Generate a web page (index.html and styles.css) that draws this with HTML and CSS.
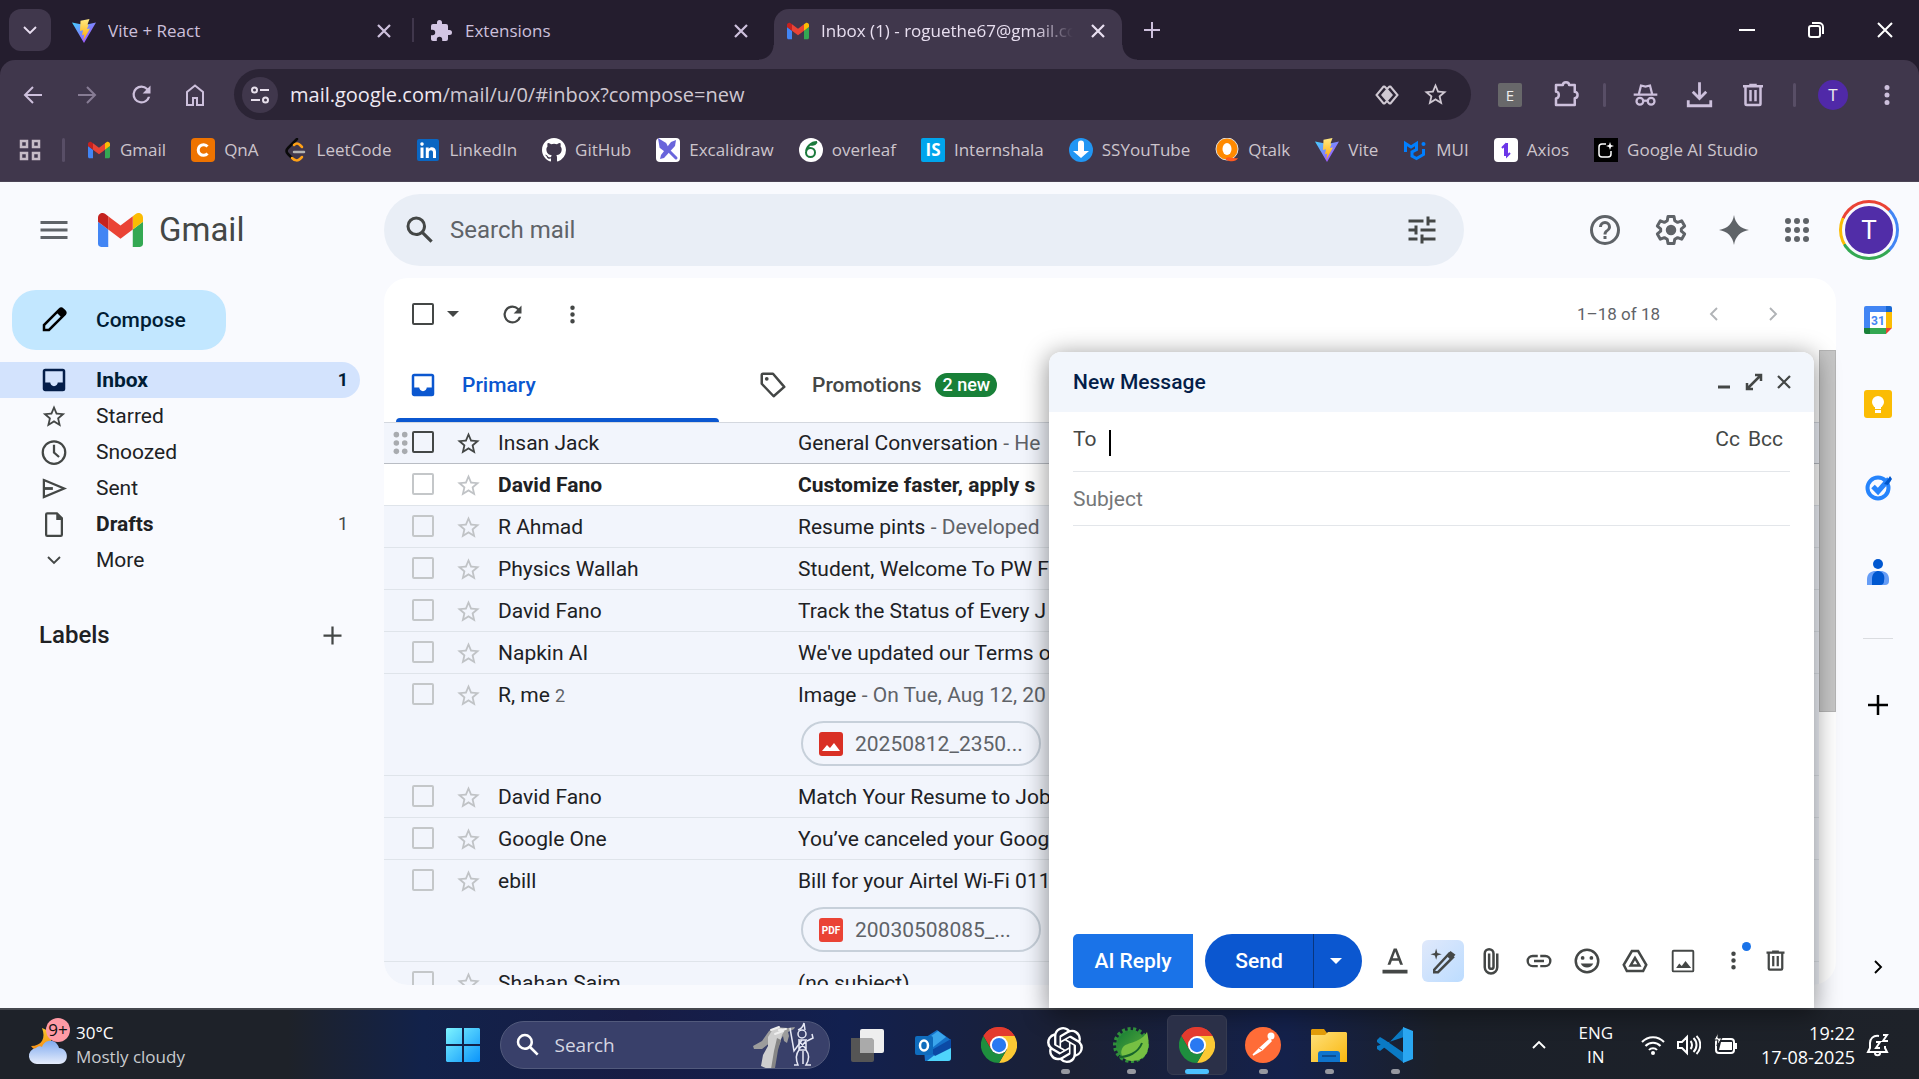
FILE: index.html
```html
<!DOCTYPE html>
<html lang="en">
<head>
<meta charset="utf-8">
<title>Inbox (1) - Gmail</title>
<link rel="stylesheet" href="styles.css">
</head>
<body>
<svg class="sprite" aria-hidden="true">
  <defs>
    <linearGradient id="viteBlue" x1="0" y1="0" x2="1" y2="1"><stop offset="0" stop-color="#41d1ff"/><stop offset="1" stop-color="#bd34fe"/></linearGradient>
    <linearGradient id="viteGold" x1="0" y1="0" x2="0" y2="1"><stop offset="0" stop-color="#ffea83"/><stop offset="1" stop-color="#ffa800"/></linearGradient>
    <linearGradient id="winBlue" x1="0" y1="0" x2="1" y2="1"><stop offset="0" stop-color="#7df4ff"/><stop offset="1" stop-color="#0a93fb"/></linearGradient>
    <linearGradient id="cloud" x1="0" y1="0" x2="0" y2="1"><stop offset="0" stop-color="#7faaf0"/><stop offset="1" stop-color="#e6edfb"/></linearGradient>
    <linearGradient id="moon" x1="0" y1="0" x2="0" y2="1"><stop offset="0" stop-color="#fbc52b"/><stop offset="1" stop-color="#f58a13"/></linearGradient>
    <linearGradient id="leaf" x1="0" y1="0" x2="1" y2="1"><stop offset="0" stop-color="#127a35"/><stop offset="1" stop-color="#63b13b"/></linearGradient>
    <linearGradient id="folder" x1="0" y1="0" x2="1" y2="1"><stop offset="0" stop-color="#ffe07a"/><stop offset="1" stop-color="#f9b70e"/></linearGradient>
  </defs>
  <symbol id="gmail" viewBox="52 42 88 66"><path fill="#4285f4" d="M58 108h14V74L52 59v43c0 3.32 2.69 6 6 6"/><path fill="#34a853" d="M120 108h14c3.32 0 6-2.69 6-6V59l-20 15"/><path fill="#fbbc04" d="M120 48v26l20-15v-8c0-7.42-8.47-11.65-14.4-7.2"/><path fill="#ea4335" d="M72 74V48l24 18 24-18v26L96 92"/><path fill="#c5221f" d="M52 51v8l20 15V48l-5.600-4.200c-5.940-4.450-14.400-.220-14.400 7.200"/></symbol>
  <symbol id="vite" viewBox="0 0 24 24"><path fill="url(#viteBlue)" d="M0 3.500 12 24 24 3.500 12.500 6z"/><path fill="url(#viteGold)" d="M17.500 0 8.500 1.800 8 12l3-.700-1 5 2.300-.8-1 6L18 9.500l-3 .6L16.500 6l-1-.5z"/></symbol>
  <symbol id="x" viewBox="0 0 24 24"><path d="M4 4l16 16M20 4L4 20" fill="none" stroke="currentColor" stroke-width="3"/></symbol>
  <symbol id="star" viewBox="0 0 24 24"><path fill="currentColor" d="M22 9.240l-7.190-.620L12 2 9.190 8.630 2 9.240l5.460 4.730L5.820 21 12 17.270 18.180 21l-1.630-7.030L22 9.240zM12 15.400l-3.760 2.270 1-4.280-3.320-2.880 4.380-.380L12 6.100l1.710 4.040 4.380.380-3.320 2.880 1 4.280L12 15.400z"/></symbol>
  <symbol id="reload" viewBox="0 0 24 24"><path fill="currentColor" d="M17.650 6.350A7.960 7.960 0 0 0 12 4a8 8 0 1 0 7.730 10h-2.080A6 6 0 1 1 12 6c1.660 0 3.140.690 4.220 1.780L13 11h7V4l-2.350 2.350z"/></symbol>
  <symbol id="dots" viewBox="0 0 24 24"><path fill="currentColor" d="M12 8a2 2 0 1 0 0-4 2 2 0 0 0 0 4zm0 2a2 2 0 1 0 0 4 2 2 0 0 0 0-4zm0 6a2 2 0 1 0 0 4 2 2 0 0 0 0-4z"/></symbol>
  <symbol id="trash" viewBox="0 0 24 24"><path fill="currentColor" d="M15 4V3H9v1H4v2h1v13a2 2 0 0 0 2 2h10a2 2 0 0 0 2-2V6h1V4h-5zm2 15H7V6h10v13zM9 8h2v9H9zm4 0h2v9h-2z"/></symbol>
  <symbol id="plus" viewBox="0 0 24 24"><path fill="currentColor" d="M20 13h-7v7h-2v-7H4v-2h7V4h2v7h7v2z"/></symbol>
  <symbol id="inbox" viewBox="0 0 24 24"><path fill="currentColor" d="M19 3H5a2 2 0 0 0-2 2v14c0 1.100.900 2 2 2h14a2 2 0 0 0 2-2V5a2 2 0 0 0-2-2zm0 11h-4c0 1.100-1.340 3-3 3s-3-1.900-3-3H5V5h14v9z"/></symbol>
  <symbol id="drop" viewBox="0 0 24 24"><path fill="currentColor" d="M4 8h16l-8 8z"/></symbol>
  <symbol id="chev" viewBox="0 0 24 24"><path d="M8 4l8 8-8 8" fill="none" stroke="currentColor" stroke-width="2.500"/></symbol>
  <symbol id="chevdown" viewBox="0 0 24 24"><path d="M4 8l8 8 8-8" fill="none" stroke="currentColor" stroke-width="2.500"/></symbol>
  <symbol id="mag" viewBox="0 0 24 24"><path fill="currentColor" d="M20.490 19l-5.730-5.730C15.530 12.200 16 10.910 16 9.500A6.500 6.500 0 1 0 9.500 16c1.410 0 2.700-.470 3.770-1.240L19 20.490 20.490 19zM5 9.500a4.500 4.500 0 1 1 9 0 4.500 4.500 0 0 1-9 0z"/></symbol>
  <symbol id="chrome" viewBox="0 0 48 48"><path fill="#e33b2e" d="M24 24L3.200 12A24 24 0 0 1 44.800 12z"/><path fill="#fcc934" d="M24 12h20.800A24 24 0 0 1 24 48l10.400-18z"/><path fill="#e33b2e" d="M13.600 18L24 12h20.800A24 24 0 0 0 3.200 12l10.400 18z"/><path fill="#1e8e3e" d="M3.200 12l10.400 18c2 3.500 6 6 10.400 6 4.300 0 8.300-2.400 10.400-6L24 48A24 24 0 0 1 3.200 12z"/><circle cx="24" cy="24" r="12" fill="#fff"/><circle cx="24" cy="24" r="9.500" fill="#2979f2"/></symbol>
</svg>

<header class="browser">
  <div class="tabs">
    <button class="tab-search" aria-label="Search tabs"><svg class="i18"><use href="#chevdown"/></svg></button>
    <div class="tab tab-vite"><svg class="i24"><use href="#vite"/></svg><span class="tab-title">Vite + React</span><button aria-label="Close tab"><svg class="i18"><use href="#x"/></svg></button></div>
    <div class="tab tab-ext"><svg class="i24" viewBox="0 0 24 24"><path fill="#d4c6e4" d="M20.500 11H19V7a2 2 0 0 0-2-2h-4V3.500a2.500 2.500 0 0 0-5 0V5H4a2 2 0 0 0-2 2v3.800h1.500a2.700 2.700 0 0 1 0 5.400H2V20c0 1.100.900 2 2 2h3.800v-1.500a2.700 2.700 0 0 1 5.400 0V22H17a2 2 0 0 0 2-2v-4h1.500a2.500 2.500 0 0 0 0-5z"/></svg><span class="tab-title">Extensions</span><button aria-label="Close tab"><svg class="i18"><use href="#x"/></svg></button></div>
    <div class="tab tab-active"><svg class="i22"><use href="#gmail"/></svg><span class="tab-title">Inbox (1) - roguethe67@gmail.com</span><button aria-label="Close tab"><svg class="i18"><use href="#x"/></svg></button></div>
    <button class="new-tab" aria-label="New tab"><svg class="i24"><use href="#plus"/></svg></button>
    <div class="window-controls">
      <button aria-label="Minimize"><svg class="i18" viewBox="0 0 18 18"><path d="M1 9h16" stroke="#fff" stroke-width="2"/></svg></button>
      <button aria-label="Restore"><svg class="i18" viewBox="0 0 18 18"><g fill="none" stroke="#fff" stroke-width="2"><rect x="2" y="5" width="11" height="11" rx="2"/><path d="M5 2h7a4 4 0 0 1 4 4v7"/></g></svg></button>
      <button aria-label="Close"><svg class="i18" viewBox="0 0 18 18"><path d="M2 2l14 14M16 2L2 16" stroke="#fff" stroke-width="2"/></svg></button>
    </div>
  </div>

  <div class="toolbar">
    <div class="nav-buttons">
      <button aria-label="Back"><svg class="i24" viewBox="0 0 24 24"><path d="M21 12H4M12 4l-8 8 8 8" fill="none" stroke="currentColor" stroke-width="2"/></svg></button>
      <button aria-label="Forward" class="faint"><svg class="i24" viewBox="0 0 24 24"><path d="M3 12h17M12 4l8 8-8 8" fill="none" stroke="currentColor" stroke-width="2"/></svg></button>
      <button aria-label="Reload"><svg class="i27"><use href="#reload"/></svg></button>
      <button aria-label="Home"><svg class="i24" viewBox="0 0 24 24"><path d="M4 22V9l8-6.500L20 9v13h-6v-7h-4v7z" fill="none" stroke="currentColor" stroke-width="2"/></svg></button>
    </div>
    <div class="omnibox">
      <button class="site-info" aria-label="Site information"><svg class="i24" viewBox="0 0 24 24"><g fill="none" stroke="currentColor" stroke-width="2"><circle cx="6.500" cy="7" r="2.500"/><path d="M12 7h9M3 17h9"/><circle cx="17.500" cy="17" r="2.500"/></g></svg></button>
      <p class="url"><b>mail.google.com</b>/mail/u/0/#inbox?compose=new</p>
      <button aria-label="Search with Lens"><svg class="i24" viewBox="0 0 24 24"><path d="M12 5l6 7-6 7-6-7z" fill="currentColor"/><path d="M9 3L1.500 12 9 21M15 3l7.500 9L15 21M9 3l3 3M15 3l-3 3M9 21l3-3M15 21l-3-3" fill="none" stroke="currentColor" stroke-width="2"/></svg></button>
      <button aria-label="Bookmark this page"><svg class="i27"><use href="#star"/></svg></button>
    </div>
    <button class="ext-e" aria-label="Extension E">E</button>
    <button class="tb-puzzle" aria-label="Extensions"><svg class="i30" viewBox="0 0 24 24"><path d="M4 4h5.500c.1-3 4.900-3 5 0H19v5.500c3 .2 3 4.800 0 5V20H4v-5.300c3-.3 3-5.100 0-5.400z" fill="none" stroke="currentColor" stroke-width="2" stroke-linejoin="round"/></svg></button>
    <i class="vline"></i>
    <button class="tb-wide" aria-label="Incognito"><svg class="i27" viewBox="0 0 24 24"><g fill="none" stroke="currentColor" stroke-width="2"><path d="M1.500 12h21M6 12l2-8 4 1 4-1 2 8"/><circle cx="7" cy="18" r="3"/><circle cx="17" cy="18" r="3"/><path d="M10 17.500h4"/></g></svg></button>
    <button class="tb-wide" aria-label="Downloads"><svg class="i27" viewBox="0 0 24 24"><path d="M12 1v14M6 9.500l6 6 6-6M2 17v5h20v-5" fill="none" stroke="currentColor" stroke-width="2.500"/></svg></button>
    <button class="tb-wide" aria-label="Delete browsing data"><svg class="i30"><use href="#trash"/></svg></button>
    <i class="vline vline-wide"></i>
    <button class="profile" aria-label="Profile">T</button>
    <button class="tb-wide" aria-label="Menu"><svg class="i30"><use href="#dots"/></svg></button>
  </div>

  <nav class="bookmarks" aria-label="Bookmarks">
    <button aria-label="Apps"><svg class="i24" viewBox="0 0 24 24"><g fill="none" stroke="#c6bcc6" stroke-width="2.500"><rect x="3" y="3" width="6" height="6"/><rect x="15" y="3" width="6" height="6"/><rect x="3" y="15" width="6" height="6"/><rect x="15" y="15" width="6" height="6"/></g></svg></button>
    <i class="vline"></i>
    <a href="#"><svg class="i24" viewBox="0 0 24 24"><use href="#gmail" x="1" y="3" width="22" height="18"/></svg>Gmail</a>
    <a href="#"><svg class="i24" viewBox="0 0 24 24"><rect width="24" height="24" rx="4" fill="#ee7300"/><path d="M16.500 8.500a5.300 5.300 0 1 0 0 7" fill="none" stroke="#fff" stroke-width="3"/></svg>QnA</a>
    <a href="#"><svg class="i24" viewBox="0 0 24 24"><g fill="none" stroke-width="2.500" stroke-linecap="round"><path d="M13 1L4 10c-2 2-2 4 0 6l4 4" stroke="#0a0a0a"/><path d="M10 7c2-2 4-2 6 0l2 2M8 20c3 3 6 3 8 1l2-2" stroke="#ffa116"/><path d="M10 14h10" stroke="#b3b3b3"/></g></svg>LeetCode</a>
    <a href="#"><svg class="i24" viewBox="0 0 24 24"><rect x="1" y="1" width="22" height="22" rx="2" fill="#0a66c2"/><path d="M4.500 9.500h3V20h-3zM6 4.300a1.800 1.800 0 1 1 0 3.600 1.800 1.800 0 0 1 0-3.600zM9.800 9.500h2.900V11c1.400-2.600 7.300-2.500 7.300 2.800V20h-3v-5.500c0-3.200-4.200-3-4.200 0V20h-3z" fill="#fff"/></svg>LinkedIn</a>
    <a href="#"><svg class="i24" viewBox="0 0 16 16"><path fill="#fff" d="M8 0C3.580 0 0 3.580 0 8c0 3.540 2.290 6.530 5.470 7.590.4.070.55-.17.55-.38 0-.19-.01-.82-.01-1.490-2.010.37-2.530-.49-2.690-.94-.09-.23-.48-.94-.82-1.130-.28-.15-.68-.52-.01-.53.63-.01 1.080.58 1.230.82.72 1.210 1.870.87 2.330.66.07-.52.28-.87.51-1.070-1.780-.2-3.640-.89-3.640-3.950 0-.87.31-1.590.82-2.150-.08-.2-.36-1.020.08-2.120 0 0 .67-.21 2.200.82a7.420 7.420 0 0 1 4 0c1.530-1.040 2.200-.82 2.200-.82.44 1.100.16 1.920.08 2.120.51.56.82 1.270.82 2.150 0 3.070-1.870 3.750-3.650 3.950.29.25.54.73.54 1.480 0 1.070-.01 1.930-.01 2.200 0 .21.15.46.55.38A8.010 8.010 0 0 0 16 8c0-4.420-3.580-8-8-8z"/></svg>GitHub</a>
    <a href="#"><svg class="i24" viewBox="0 0 24 24"><rect width="24" height="24" rx="4" fill="#fff"/><path d="M20 2l-1 6-11 12-4 1 1-4L15 4z" fill="#6965db"/><path d="M4 3l5 3 2 4-2 2-4-3zM14 14l6 6" fill="#6965db" stroke="#6965db" stroke-width="3" stroke-linecap="round"/></svg>Excalidraw</a>
    <a href="#"><svg class="i24" viewBox="0 0 24 24"><circle cx="12" cy="12" r="12" fill="#fff"/><path d="M18 4c-6 0-11 5-11 10.500a4.500 4.500 0 1 0 4.500-4.500c-2 0-4 1.500-4.500 4M11 6c2 1 5 1 7-2" fill="none" stroke="#1b7a3c" stroke-width="2"/></svg>overleaf</a>
    <a href="#"><svg class="i24" viewBox="0 0 24 24"><rect width="24" height="24" rx="2" fill="#00a5ec"/><text x="12" y="18" text-anchor="middle" class="is-mark">IS</text></svg>Internshala</a>
    <a href="#"><svg class="i24" viewBox="0 0 24 24"><circle cx="12" cy="12" r="12" fill="#2196f3"/><path d="M12 20l-8-7h5V5.500a3 3 0 0 1 6 0V13h5z" fill="#fff"/></svg>SSYouTube</a>
    <a href="#"><svg class="i24" viewBox="0 0 24 24"><circle cx="12" cy="11" r="11" fill="#ff8a00" stroke="#ddd" stroke-width="1"/><ellipse cx="12" cy="11" rx="4.500" ry="6" fill="#fff"/><path d="M11 20c4-2 5 1 12 0-2 4-7 4-12 2z" fill="#ff5a1f"/></svg>Qtalk</a>
    <a href="#"><svg class="i24"><use href="#vite"/></svg>Vite</a>
    <a href="#"><svg class="i24" viewBox="0 0 24 24"><g fill="none" stroke="#007fff" stroke-width="3"><path d="M2.500 14V5.500L8 9l5.500-3.500v6L9 14v4l4.500 2.500 7-4V11"/></g><circle cx="20.500" cy="6" r="2" fill="#007fff"/></svg>MUI</a>
    <a href="#"><svg class="i24" viewBox="0 0 24 24"><rect width="24" height="24" rx="4" fill="#fff"/><path d="M8 10l3-3v11M16 15l-3 3V5" fill="none" stroke="#6b35e8" stroke-width="2"/></svg>Axios</a>
    <a href="#"><svg class="i24" viewBox="0 0 24 24"><rect width="24" height="24" fill="#000"/><path d="M12 6H8a3 3 0 0 0-3 3v7a3 3 0 0 0 3 3h6a3 3 0 0 0 3-3v-3" fill="none" stroke="#fff" stroke-width="1.500"/><path d="M16 4l1 3 3 1-3 1-1 3-1-3-3-1 3-1z" fill="#fff"/></svg>Google AI Studio</a>
  </nav>
</header>

<div class="gmail">
  <header class="gm-header">
    <div class="brand">
      <button aria-label="Main menu"><svg class="i36" viewBox="0 0 24 24"><path fill="#5f6368" d="M3 18h18v-2H3v2zm0-5h18v-2H3v2zm0-7v2h18V6H3z"/></svg></button>
      <a href="#" class="logo"><svg><use href="#gmail"/></svg><span>Gmail</span></a>
    </div>
    <form class="search">
      <button type="button" aria-label="Search"><svg class="i36"><use href="#mag"/></svg></button>
      <input type="text" aria-label="Search mail" placeholder="Search mail">
      <button type="button" aria-label="Show search options"><svg class="i36" viewBox="0 0 24 24"><path fill="currentColor" d="M3 17v2h6v-2H3zM3 5v2h10V5H3zm10 16v-2h8v-2h-8v-2h-2v6h2zM7 9v2H3v2h4v2h2V9H7zm14 4v-2H11v2h10zm-6-4h2V7h4V5h-4V3h-2v6z"/></svg></button>
    </form>
    <div class="gm-actions">
      <button class="support" aria-label="Support"><svg class="i36" viewBox="0 0 24 24"><path fill="currentColor" d="M11 18h2v-2h-2v2zm1-16a10 10 0 1 0 0 20 10 10 0 0 0 0-20zm0 18a8 8 0 1 1 0-16 8 8 0 0 1 0 16zm0-14a4 4 0 0 0-4 4h2a2 2 0 1 1 4 0c0 2-3 1.750-3 5h2c0-2.250 3-2.500 3-5a4 4 0 0 0-4-4z"/></svg></button>
      <button aria-label="Settings"><svg class="i36" viewBox="0 0 24 24"><path d="M10 3h4l.5 2.800 1.900 1.100 2.700-1 2 3.500-2.200 1.800v1.600l2.200 1.800-2 3.500-2.700-1-1.900 1.100L14 21h-4l-.5-2.800-1.900-1.100-2.700 1-2-3.500 2.200-1.800v-1.600L2.900 9.400l2-3.500 2.700 1 1.900-1.100z" fill="none" stroke="currentColor" stroke-width="2" stroke-linejoin="round"/><circle cx="12" cy="12" r="3.500" fill="currentColor"/></svg></button>
      <button aria-label="Try Gemini"><svg class="i36" viewBox="0 0 24 24"><path fill="currentColor" d="M12 2c.8 5.600 4.400 9.200 10 10-5.600.8-9.200 4.400-10 10-.8-5.600-4.400-9.200-10-10 5.600-.8 9.200-4.400 10-10z"/></svg></button>
      <button aria-label="Google apps"><svg class="i36" viewBox="0 0 24 24"><g fill="currentColor"><circle cx="6" cy="6" r="2"/><circle cx="12" cy="6" r="2"/><circle cx="18" cy="6" r="2"/><circle cx="6" cy="12" r="2"/><circle cx="12" cy="12" r="2"/><circle cx="18" cy="12" r="2"/><circle cx="6" cy="18" r="2"/><circle cx="12" cy="18" r="2"/><circle cx="18" cy="18" r="2"/></g></svg></button>
      <button class="account" aria-label="Google Account"><span>T</span></button>
    </div>
  </header>

  <div class="gm-body">
    <aside class="sidebar">
      <button class="compose-btn"><svg class="i30" viewBox="0 0 24 24"><path d="M4 20v-4L16.500 3.500a1.800 1.800 0 0 1 2.500 0L20.500 5a1.800 1.800 0 0 1 0 2.500L8 20z" fill="none" stroke="#000" stroke-width="2"/><path d="M14 6l3-3h2l2.500 2.500v2L18 10z"/></svg>Compose</button>
      <nav class="folders">
        <a href="#" class="current"><svg class="i30"><use href="#inbox"/></svg><span>Inbox</span><em>1</em></a>
        <a href="#"><svg class="i27"><use href="#star"/></svg><span>Starred</span></a>
        <a href="#"><svg class="i27" viewBox="0 0 24 24"><g fill="none" stroke="currentColor" stroke-width="2"><circle cx="12" cy="12" r="10"/><path d="M12 5v7l4.500 4"/></g></svg><span>Snoozed</span></a>
        <a href="#"><svg class="i27" viewBox="0 0 24 24"><path d="M3 4.500L21 12 3 19.500z" fill="none" stroke="currentColor" stroke-width="2"/><path d="M3 12h8" stroke="currentColor" stroke-width="2.500"/></svg><span>Sent</span></a>
        <a href="#" class="unread"><svg class="i27" viewBox="0 0 24 24"><path fill="currentColor" d="M15 1H6a2 2 0 0 0-2 2v18a2 2 0 0 0 2 2h12a2 2 0 0 0 2-2V6zM6 21V3h8v5h4v13z"/></svg><span>Drafts</span><em>1</em></a>
        <a href="#"><svg class="i18"><use href="#chevdown"/></svg><span>More</span></a>
      </nav>
      <div class="labels"><h2>Labels</h2><button aria-label="Create new label"><svg class="i27"><use href="#plus"/></svg></button></div>
    </aside>

    <main class="mail">
      <div class="mail-toolbar">
        <input type="checkbox" aria-label="Select all">
        <button aria-label="Select"><svg class="i18"><use href="#drop"/></svg></button>
        <button class="refresh" aria-label="Refresh"><svg class="i27"><use href="#reload"/></svg></button>
        <button class="more" aria-label="More"><svg class="i27"><use href="#dots"/></svg></button>
        <span class="range">1–18 of 18</span>
        <button class="page-btn flip" aria-label="Newer"><svg class="i18"><use href="#chev"/></svg></button>
        <button class="page-btn" aria-label="Older"><svg class="i18"><use href="#chev"/></svg></button>
      </div>
      <div class="mail-scroll">
        <div class="mail-content">
          <div class="categories">
            <button class="active"><svg class="i30"><use href="#inbox"/></svg>Primary</button>
            <button><svg class="i30" viewBox="0 0 24 24"><path d="M3 4v7l9.500 10 8.500-7.500L12 3H4a1 1 0 0 0-1 1z" fill="none" stroke="currentColor" stroke-width="2" stroke-linejoin="round"/><circle cx="7" cy="7" r="1.500" fill="currentColor"/></svg>Promotions<span class="badge">2 new</span></button>
          </div>
          <table class="messages">
            <colgroup><col class="c-check"><col class="c-star"><col class="c-from"><col></colgroup>
            <tbody>
              <tr class="hover"><td><svg class="grip" viewBox="0 0 16 28"><g fill="#a8abaf"><circle cx="3" cy="5" r="3"/><circle cx="12" cy="5" r="3"/><circle cx="3" cy="14" r="3"/><circle cx="12" cy="14" r="3"/><circle cx="3" cy="23" r="3"/><circle cx="12" cy="23" r="3"/></g></svg><input type="checkbox" aria-label="Select Insan Jack"></td><td><button aria-label="Star"><svg class="i27"><use href="#star"/></svg></button></td><td>Insan Jack</td><td>General Conversation <span>- He</span></td></tr>
              <tr class="new"><td><input type="checkbox" aria-label="Select David Fano"></td><td><button aria-label="Star"><svg class="i27"><use href="#star"/></svg></button></td><td>David Fano</td><td>Customize faster, apply s</td></tr>
              <tr><td><input type="checkbox" aria-label="Select R Ahmad"></td><td><button aria-label="Star"><svg class="i27"><use href="#star"/></svg></button></td><td>R Ahmad</td><td>Resume pints <span>- Developed</span></td></tr>
              <tr><td><input type="checkbox" aria-label="Select Physics Wallah"></td><td><button aria-label="Star"><svg class="i27"><use href="#star"/></svg></button></td><td>Physics Wallah</td><td>Student, Welcome To PW F</td></tr>
              <tr><td><input type="checkbox" aria-label="Select David Fano"></td><td><button aria-label="Star"><svg class="i27"><use href="#star"/></svg></button></td><td>David Fano</td><td>Track the Status of Every J</td></tr>
              <tr><td><input type="checkbox" aria-label="Select Napkin AI"></td><td><button aria-label="Star"><svg class="i27"><use href="#star"/></svg></button></td><td>Napkin AI</td><td>We've updated our Terms o</td></tr>
              <tr><td><input type="checkbox" aria-label="Select R, me"></td><td><button aria-label="Star"><svg class="i27"><use href="#star"/></svg></button></td><td>R, me <small>2</small></td><td>Image <span>- On Tue, Aug 12, 20</span><a href="#" class="chip"><svg class="i24" viewBox="0 0 24 24"><rect width="24" height="24" rx="3" fill="#d93025"/><path d="M3 19l5-6 3 3 4-5 6 8z" fill="#fff"/></svg>20250812_2350...</a></td></tr>
              <tr><td><input type="checkbox" aria-label="Select David Fano"></td><td><button aria-label="Star"><svg class="i27"><use href="#star"/></svg></button></td><td>David Fano</td><td>Match Your Resume to Job</td></tr>
              <tr><td><input type="checkbox" aria-label="Select Google One"></td><td><button aria-label="Star"><svg class="i27"><use href="#star"/></svg></button></td><td>Google One</td><td>You’ve canceled your Goog</td></tr>
              <tr><td><input type="checkbox" aria-label="Select ebill"></td><td><button aria-label="Star"><svg class="i27"><use href="#star"/></svg></button></td><td>ebill</td><td>Bill for your Airtel Wi-Fi 011<a href="#" class="chip"><svg class="i24" viewBox="0 0 24 24"><rect width="24" height="24" rx="3" fill="#ea4335"/><text x="12" y="16" text-anchor="middle" class="pdf-mark">PDF</text></svg>20030508085_...</a></td></tr>
              <tr><td><input type="checkbox" aria-label="Select Shahan Saim"></td><td><button aria-label="Star"><svg class="i27"><use href="#star"/></svg></button></td><td>Shahan Saim</td><td>(no subject)</td></tr>
            </tbody>
          </table>
        </div>
        <div class="scrollbar"><i></i></div>
      </div>
    </main>

    <aside class="side-panel">
      <a href="#" aria-label="Calendar"><svg class="i30" viewBox="0 0 30 30"><path d="M3 1h21v6H7v17H1V3a2 2 0 0 1 2-2z" fill="#4285f4"/><path d="M23 1h4a2 2 0 0 1 2 2v4h-6z" fill="#1967d2"/><path d="M23 7h6v16h-6z" fill="#fbbc04"/><path d="M7 23h16v6H7z" fill="#34a853"/><path d="M1 23h6v6H3a2 2 0 0 1-2-2z" fill="#188038"/><path d="M23 23h6l-6 6z" fill="#ea4335"/><path d="M7 7h16v16H7z" fill="#fff"/><text x="15" y="20" text-anchor="middle" class="cal-mark">31</text></svg></a>
      <a href="#" aria-label="Keep"><svg class="i30" viewBox="0 0 30 30"><rect x="1" y="1" width="28" height="28" rx="3" fill="#fbbc04"/><circle cx="15" cy="13" r="6" fill="#fff"/><path d="M12 17h6v3h-6zM12 21h6v3h-6z" fill="#fff"/></svg></a>
      <a href="#" aria-label="Tasks"><svg class="i30" viewBox="0 0 30 30"><circle cx="15" cy="15" r="10.500" fill="none" stroke="#2684fc" stroke-width="4"/><path d="M10 13.500l5 5L26 6" fill="none" stroke="#2684fc" stroke-width="5"/><path d="M21 11l4-5 2-3 2 3-4 6z" fill="#0057cc"/></svg></a>
      <a href="#" aria-label="Contacts"><svg class="i30" viewBox="0 0 30 30"><circle cx="15" cy="7" r="5" fill="#0057d0"/><path d="M4 22c0-6 5-8 8-8h6c3 0 8 2 8 8v2a4 4 0 0 1-4 4H4z" fill="#669df6"/><path d="M9 22c0-6 4-8 6-8s8 2 6 10a4 4 0 0 1-4 4H9z" fill="#0057d0"/></svg></a>
      <hr>
      <button aria-label="Get add-ons"><svg class="i30"><use href="#plus"/></svg></button>
      <button class="hide" aria-label="Hide side panel"><svg class="i18"><use href="#chev"/></svg></button>
    </aside>
  </div>

  <section class="composer" aria-label="New Message">
    <header><h2>New Message</h2>
      <button aria-label="Minimize"><svg class="i18" viewBox="0 0 18 18"><path d="M3 14h12" stroke="currentColor" stroke-width="3"/></svg></button>
      <button aria-label="Full screen"><svg class="i18" viewBox="0 0 18 18"><path d="M10 2h6v6M16 2L2 16M2 10v6h6" fill="none" stroke="currentColor" stroke-width="2.500"/></svg></button>
      <button aria-label="Close"><svg class="i18"><use href="#x"/></svg></button>
    </header>
    <div class="field to"><label for="to">To</label><i class="caret"></i><input id="to" type="text"><button>Cc</button><button>Bcc</button></div>
    <div class="field subject"><input type="text" aria-label="Subject" placeholder="Subject"></div>
    <textarea aria-label="Message Body"></textarea>
    <footer>
      <button class="ai">AI Reply</button>
      <div class="send"><button>Send</button><button aria-label="More send options"><svg class="i18"><use href="#drop"/></svg></button></div>
      <div class="tools">
        <button aria-label="Formatting options"><svg class="i30" viewBox="0 0 24 24"><path fill="currentColor" d="M2 19h20v3H2zM11 2h2.400l5 13h-2.300l-1.200-3.300H9.500L8.300 15H6zm-.8 7.800h4L12.200 4.400z"/></svg></button>
        <button class="lit" aria-label="Help me write"><svg class="i30" viewBox="0 0 24 24"><path d="M7 21l-2 0 0-2L17 6l3 3L8 21z" fill="none" stroke="currentColor" stroke-width="2"/><path d="M15 8l3-4 4 3-4 4z" fill="currentColor"/><path d="M6.500 2l1 3.500L11 6.500l-3.500 1-1 3.500-1-3.500L2 6.500l3.500-1z" fill="currentColor"/></svg></button>
        <button aria-label="Attach files"><svg class="i30" viewBox="0 0 24 24"><path d="M17 6v11a5 5 0 0 1-10 0V6a3.500 3.500 0 0 1 7 0v10.500a1.500 1.500 0 0 1-3.500 0V6" fill="none" stroke="currentColor" stroke-width="2"/></svg></button>
        <button aria-label="Insert link"><svg class="i30" viewBox="0 0 24 24"><path fill="currentColor" d="M3.900 12A3.100 3.100 0 0 1 7 8.900h4V7H7a5 5 0 0 0 0 10h4v-1.900H7A3.100 3.100 0 0 1 3.900 12zM8 13h8v-2H8v2zm9-6h-4v1.900h4a3.100 3.100 0 0 1 0 6.200h-4V17h4a5 5 0 0 0 0-10z"/></svg></button>
        <button aria-label="Insert emoji"><svg class="i30" viewBox="0 0 24 24"><circle cx="12" cy="12" r="9" fill="none" stroke="currentColor" stroke-width="2"/><g fill="currentColor"><circle cx="8.500" cy="9.500" r="1.500"/><circle cx="15.500" cy="9.500" r="1.500"/><path d="M7 14h10a5.500 5.500 0 0 1-10 0z"/></g></svg></button>
        <button aria-label="Insert from Drive"><svg class="i30" viewBox="0 0 24 24"><path d="M9.500 4h5l6.500 11-2.500 5h-13L3 15zM12 9.500L8.500 15.500h7z" fill="none" stroke="currentColor" stroke-width="2"/></svg></button>
        <button aria-label="Insert photo"><svg class="i30" viewBox="0 0 24 24"><path fill="currentColor" d="M19.500 4.500v15h-15v-15h15m0-1.500h-15A1.500 1.500 0 0 0 3 4.500v15A1.500 1.500 0 0 0 4.500 21h15a1.500 1.500 0 0 0 1.500-1.500v-15A1.500 1.500 0 0 0 19.500 3zM6.500 17.500l2.500-3.500 2 2 3-4 4.500 5.500z"/></svg></button>
        <button class="tool-more" aria-label="More options"><svg class="i27"><use href="#dots"/></svg><i></i></button>
        <button aria-label="Discard draft"><svg class="i27"><use href="#trash"/></svg></button>
      </div>
    </footer>
  </section>
</div>

<footer class="taskbar">
  <button class="weather">
    <svg viewBox="0 0 42 46"><path d="M14 10c4 10 0 18-11 18 4 6 12 7 20 2V14z" fill="url(#moon)"/><path d="M10 46a8 8 0 0 1-2-16c2-2 5-2 6-1 3-9 15-8 17 1 10 0 11 16 0 16z" fill="url(#cloud)"/><circle cx="30" cy="12" r="12" fill="#ff9aa5"/><text x="30" y="18" text-anchor="middle">9+</text></svg>
    <span><b>30°C</b>Mostly cloudy</span>
  </button>
  <div class="apps">
    <button aria-label="Start"><svg class="i36" viewBox="0 0 36 36"><path d="M2 1h15v16H1V2zM19 1h15l1 1v15H19zM1 19h16v16H2l-1-1zM19 19h16v15l-1 1H19z" fill="url(#winBlue)"/></svg></button>
    <label class="tb-search"><svg class="i30"><use href="#mag"/></svg><input type="text" placeholder="Search">
      <svg class="puppet" viewBox="0 0 66 46"><path d="M0 24l9-5 7-10c5-4 12-4 19-3l7-1-1 2-6 3 1 4-2 7-3-2-1-5-4 6-5 2-3-2-9 7-8 0z" fill="#9c9c9c"/><path d="M15 15l5-8 6-2 6 3-3 5-2 8-5 10-3 15-4 1-7-3 2-11 5-9z" fill="#cfcfcf"/><path d="M24 16l4 2-3 10-3 18-4 1 3-18z" fill="#868686"/><path d="M18 8l8-3M26 8l7-1M22 12l8-3" stroke="#eee" stroke-width="2" stroke-linecap="round"/><g fill="none" stroke="#e6e8f5" stroke-width="1.500"><path d="M37 6l4 23 8-11M45 8c3-1 5-3 6-7l1 7M54 19l6-3-1-4"/><circle cx="49" cy="12" r="4"/><path d="M45 18h9M46 19l7 8M53 19l-7 8M46 19v9c-4 5-3 10-1 15h-4M53 19v9c4 5 3 10 0 15h5M46 28h7M50 29v13"/></g></svg></label>
    <button aria-label="Task View"><svg class="i36" viewBox="0 0 36 36"><rect x="11" y="2" width="24" height="24" rx="2" fill="#eee"/><path d="M2 11h9v15h14v7a2 2 0 0 1-2 2H4a2 2 0 0 1-2-2z" fill="#555"/><path d="M11 11h12l2 2v13H11z" fill="#aaa"/></svg></button>
    <button aria-label="Outlook"><svg class="i36" viewBox="0 0 36 36"><path d="M8 12L22 3l14 10v18a3 3 0 0 1-3 3H10z" fill="#1470c8"/><path d="M12 12l11-8 8 6-14 11z" fill="#3aa6ec"/><path d="M36 15v16a3 3 0 0 1-3 3H12z" fill="#4fd4fb"/><path d="M36 12v9L20 29l-5-5z" fill="#0b4aa5"/><rect y="9" width="18" height="19" rx="2" fill="#0f6cbd"/><ellipse cx="9" cy="18.500" rx="4" ry="5" fill="none" stroke="#fff" stroke-width="2.500"/></svg></button>
    <button aria-label="Chrome"><svg class="i36"><use href="#chrome"/></svg></button>
    <button aria-label="ChatGPT" class="running"><svg class="i36" viewBox="0 0 24 24"><path fill="#fff" d="M22.280 9.820a5.980 5.980 0 0 0-.52-4.910 6.050 6.050 0 0 0-6.510-2.900A6.070 6.070 0 0 0 4.980 4.180a5.980 5.980 0 0 0-4 2.900 6.050 6.050 0 0 0 .74 7.100 5.980 5.980 0 0 0 .51 4.910 6.050 6.050 0 0 0 6.520 2.900A5.980 5.980 0 0 0 13.260 24a6.060 6.060 0 0 0 5.770-4.210 5.990 5.990 0 0 0 4-2.900 6.060 6.060 0 0 0-.75-7.070zm-9.020 12.610a4.480 4.480 0 0 1-2.880-1.040l.14-.08 4.780-2.760a.8.8 0 0 0 .39-.68v-6.740l2.020 1.170a.07.07 0 0 1 .04.05v5.580a4.500 4.500 0 0 1-4.490 4.500zM3.600 18.300a4.470 4.470 0 0 1-.54-3.010l.14.09 4.780 2.760a.77.77 0 0 0 .78 0l5.840-3.370v2.330a.08.08 0 0 1-.03.06L9.740 19.950A4.500 4.500 0 0 1 3.600 18.300zM2.340 7.900a4.480 4.480 0 0 1 2.370-1.980v5.680a.77.77 0 0 0 .39.68l5.810 3.350-2.020 1.170a.08.08 0 0 1-.07 0l-4.830-2.790A4.500 4.500 0 0 1 2.340 7.870zm16.600 3.860L13.100 8.360l2.020-1.160a.08.08 0 0 1 .07 0l4.830 2.790a4.490 4.490 0 0 1-.68 8.100v-5.680a.79.79 0 0 0-.4-.65zm2.010-3.020l-.14-.09-4.770-2.780a.78.78 0 0 0-.79 0L9.410 9.230V6.900a.07.07 0 0 1 .03-.06l4.830-2.790a4.500 4.500 0 0 1 6.680 4.660zM8.310 12.860l-2.020-1.160a.08.08 0 0 1-.04-.06V6.070a4.500 4.500 0 0 1 7.380-3.450l-.14.08-4.780 2.760a.8.8 0 0 0-.39.68zm1.100-2.360l2.600-1.500 2.610 1.500v3l-2.600 1.500-2.610-1.500z"/></svg></button>
    <button aria-label="Spring Tools" class="running"><svg class="i36" viewBox="0 0 36 36"><circle cx="18" cy="18" r="15" fill="url(#leaf)"/><circle cx="18" cy="18" r="16" fill="none" stroke="#2f8f3a" stroke-width="4" stroke-dasharray="3 2.500"/><path d="M34 5c4 16 1 29-15 29-7 0-13-6-10-12C12 14 26 18 34 5z" fill="#76c043"/><path d="M6 30c9 0 19-4 23-14" fill="none" stroke="#17652c" stroke-width="2"/></svg></button>
    <button aria-label="Chrome" class="running focused"><svg class="i36"><use href="#chrome"/></svg></button>
    <button aria-label="Postman" class="running"><svg class="i36" viewBox="0 0 36 36"><circle cx="18" cy="18" r="18" fill="#ff6c37"/><circle cx="26" cy="9" r="3.500" fill="#fff"/><path d="M25 12L15 21l-7 7 9-5 9-9z" fill="#fff" stroke="#fff" stroke-width="1.500"/><path d="M14 21l3 2" stroke="#ff6c37"/></svg></button>
    <button aria-label="File Explorer" class="running"><svg class="i36" viewBox="0 0 36 36"><path d="M1 2h12l3 4v6H0V3z" fill="#e19b09"/><path d="M0 8h14l3-3h18l1 1v29H0z" fill="url(#folder)"/><path d="M7 35V27a3 3 0 0 1 3-3h16a3 3 0 0 1 3 3v8z" fill="#0f74cd"/><path d="M11 29h14" stroke="#0b4f94" stroke-width="2"/></svg></button>
    <button aria-label="VS Code" class="running"><svg class="i36" viewBox="0 0 36 36"><path d="M27 0L8 20l-5 4-3-2v-3L27 10z" fill="#0a7ac4"/><path d="M0 13l3-3 5 3 19 13v10L0 15z" fill="#0a7ac4"/><path d="M26 0l10 4v28l-10 4V0z" fill="#2aa7f2"/></svg></button>
  </div>
  <div class="tray">
    <button aria-label="Show hidden icons" class="up"><svg class="i18"><use href="#chevdown"/></svg></button>
    <button class="lang">ENG<br>IN</button>
    <button class="status" aria-label="Network, volume, battery">
      <svg class="i24" viewBox="0 0 24 24"><g fill="none" stroke="#fff" stroke-width="2"><path d="M1 9c6-6.500 16-6.500 22 0M4.500 13c4-4.500 11-4.500 15 0M8 17c2-2.500 6-2.500 8 0"/></g><circle cx="12" cy="20" r="2" fill="#fff"/></svg>
      <svg class="i24" viewBox="0 0 24 24"><g fill="none" stroke="#fff" stroke-width="2"><path d="M1 9h4l5-5v16l-5-5H1zM13.500 8c2 2 2 6 0 8M16.500 5c4 4 4 10 0 14M19.500 3c5 5 5 13 0 18"/></g></svg>
      <svg class="i24" viewBox="0 0 24 24"><rect x="3" y="6" width="18" height="14" rx="3" fill="none" stroke="#fff" stroke-width="2"/><path d="M6 17l2-8h11v8zM22 10h2v6h-2z" fill="#fff"/><path d="M5 0L1 7h4l-1 6 5-8H5z" fill="#fff" stroke="#1e2229"/></svg>
    </button>
    <button class="clock">19:22<br>17-08-2025</button>
    <button class="bell" aria-label="Notifications"><svg class="i24" viewBox="0 0 24 24"><g fill="none" stroke="#fff" stroke-width="2"><path d="M13 3C7 2 4 6 4 10v5l-2 4h19l-2-4v-2M9 20c0 3 5 3 5 0M10 9h4l-4 6h4M17 2h4l-4 6h5"/></g></svg></button>
  </div>
</footer>
</body>
</html>
```
FILE: styles.css
```css
* { box-sizing: border-box; }

body {
  margin: 0;
  height: 100vh;
  display: flex;
  flex-direction: column;
  overflow: hidden;
  background: #f9fafe;
  color: #202124;
  font-family: Roboto, "Liberation Sans", sans-serif;
  font-size: 21px;
  line-height: 24px;
}

button, input, textarea {
  margin: 0;
  padding: 0;
  border: 0;
  background: none;
  color: inherit;
  font: inherit;
  outline: 0;
}

button { display: flex; align-items: center; justify-content: center; flex: none; }
a { color: inherit; text-decoration: none; }
h2, p { margin: 0; font-weight: 400; }
svg { display: block; flex: none; }
i, em { font-style: normal; }

.sprite { position: absolute; width: 0; height: 0; }
.i18 { width: 18px; height: 18px; }
.i22 { width: 22px; height: 18px; }
.i24 { width: 24px; height: 24px; }
.i27 { width: 27px; height: 27px; }
.i30 { width: 30px; height: 30px; }
.i36 { width: 36px; height: 36px; }

/* Browser frame */
.browser {
  flex: none;
  background: #241d2e;
  color: #cdc0dc;
  font-family: "Open Sans", "Noto Sans", sans-serif;
  font-size: 17px;
}

.tabs { display: flex; align-items: flex-end; height: 60px; padding-left: 9px; }
.tab-search { width: 42px; height: 42px; margin-bottom: 9px; border-radius: 12px; background: #40374c; color: #e8def0; }
.tab { display: flex; align-items: center; height: 51px; padding-bottom: 7px; }
.tab .i24, .tab .i22 { margin-right: 12px; }
.tab-title { flex: 1; min-width: 0; white-space: nowrap; overflow: hidden; }
.tab-vite { width: 363px; padding: 0 21px 7px 21px; position: relative; }
.tab-vite::after { content: ""; position: absolute; right: 0; top: 9px; width: 2px; height: 24px; background: #40374c; }
.tab-ext { width: 360px; padding: 0 24px 7px 15px; }
.tab-active { position: relative; width: 348px; padding: 0 15px 7px 13px; border-radius: 15px 15px 0 0; background: #40374c; color: #e8dff0; }
.tab-active::before, .tab-active::after {
  content: "";
  position: absolute;
  bottom: 0;
  width: 15px;
  height: 15px;
}
.tab-active::before { left: -15px; background: radial-gradient(circle at 0 0, transparent 14px, #40374c 15px); }
.tab-active::after { right: -15px; background: radial-gradient(circle at 100% 0, transparent 14px, #40374c 15px); }
.tab-active .tab-title { margin-right: 16px; mask-image: linear-gradient(90deg, #000 85%, transparent); }
.new-tab { width: 60px; height: 51px; padding-bottom: 9px; }
.window-controls { display: flex; margin-left: auto; }
.window-controls button { width: 69px; height: 60px; }

.toolbar {
  display: flex;
  align-items: center;
  height: 69px;
  padding: 0 5px 0 6px;
  border-radius: 15px 15px 0 0;
  background: #40374c;
}
.nav-buttons { display: flex; }
.nav-buttons button { width: 54px; height: 48px; }
.faint { opacity: .5; }
.omnibox {
  flex: 1;
  display: flex;
  align-items: center;
  height: 51px;
  margin: 0 16px 0 12px;
  padding: 0 12px 0 8px;
  border-radius: 26px;
  background: #2b2435;
  color: #cfc8d2;
}
.omnibox button { width: 48px; height: 36px; }
.omnibox .site-info { width: 36px; border-radius: 18px; background: #40374c; color: #e8e0ec; }
.url { flex: 1; margin-left: 12px; font-size: 20px; }
.url b { font-weight: 400; color: #efe9f2; }
.ext-e { width: 24px; height: 24px; margin: 0 11px; border-radius: 2px; background: #68686a; color: #eee; font-size: 15px; }
.tb-puzzle { width: 66px; height: 48px; }
.vline { width: 3px; height: 24px; border-radius: 2px; background: #584e66; }
.toolbar .vline { margin: 0 12px 0 4px; }
.toolbar .vline-wide { margin: 0 10px 0 13px; }
.tb-wide { width: 54px; height: 48px; }
.profile { width: 30px; height: 30px; margin: 0 12px; border-radius: 50%; background: #5029a8; color: #eee; font-size: 17px; }

.bookmarks {
  display: flex;
  align-items: center;
  gap: 25px;
  height: 53px;
  padding: 0 18px 10px;
  border-bottom: 1px solid #4c4556;
  background: #40374c;
  color: #cdc5cc;
  white-space: nowrap;
}
.bookmarks .vline { margin: 0 -3px 0 -5px; }
.bookmarks a { display: flex; align-items: center; gap: 9px; }
.is-mark { fill: #fff; font-size: 17px; font-weight: 700; }

/* Gmail shell */
.gmail { flex: 1; min-height: 0; display: flex; flex-direction: column; position: relative; }
.gm-header { display: flex; align-items: center; height: 96px; flex: none; padding-right: 20px; }
.brand { display: flex; align-items: center; width: 384px; flex: none; padding-left: 36px; }
.logo { display: flex; align-items: center; margin-left: 26px; font-size: 33px; color: #444746; }
.logo svg { width: 45px; height: 34px; margin-right: 16px; }
.search { flex: 1 1 auto; max-width: 1080px; display: flex; align-items: center; height: 72px; padding: 0 24px 0 18px; border-radius: 36px; background: #e9eef6; color: #444746; }
.search input { flex: 1; margin-left: 12px; font-size: 24px; }
.search input::placeholder { color: #5f6368; opacity: 1; }
.gm-actions { display: flex; align-items: center; margin-left: auto; gap: 27px; color: #5f6368; }
.support { margin-right: 3px; }
.account {
  width: 60px;
  height: 60px;
  margin-left: -3px;
  border-radius: 50%;
  background: conic-gradient(#ea4335 0 45deg, #4285f4 45deg 135deg, #34a853 135deg 240deg, #fbbc04 240deg 295deg, #ea4335 295deg);
}
.account span { width: 54px; height: 54px; border: 3px solid #f9fafe; border-radius: 50%; background: #512da8; color: #fff; font-size: 26px; line-height: 48px; }

.gm-body { flex: 1; min-height: 0; display: flex; padding-bottom: 23px; }
.sidebar { width: 384px; flex: none; padding-top: 12px; }
.compose-btn { width: 214px; height: 60px; margin-left: 12px; padding-left: 27px; gap: 27px; justify-content: flex-start; border-radius: 24px; background: #c2e7ff; color: #001d35; font-weight: 500; }
.folders { margin: 12px 24px 39px 0; }
.folders a { display: flex; align-items: center; height: 36px; padding: 0 12px 0 36px; color: #444746; }
.folders svg { width: 36px; padding: 0 3px; }
.folders .i18 { padding: 0; }
.folders span { flex: 1; margin-left: 24px; color: #202124; }
.folders em { font-size: 18px; }
.folders .current { border-radius: 0 18px 18px 0; background: #d3e3fd; color: #041e49; }
.folders .current span, .folders .current em { color: #001d35; font-weight: 700; }
.folders .unread span { font-weight: 700; }
.labels { display: flex; align-items: center; justify-content: space-between; height: 36px; padding: 0 38px 0 39px; font-size: 24px; color: #444746; }
.labels h2 { font-size: 24px; font-weight: 500; color: #202124; }

/* Message list */
.mail { flex: 1; min-width: 0; display: flex; flex-direction: column; overflow: hidden; border-radius: 24px; background: #fff; }
.mail-toolbar { display: flex; align-items: center; height: 72px; flex: none; padding: 0 49px 0 28px; color: #444746; }
input[type="checkbox"] { appearance: none; display: block; flex: none; width: 22px; height: 22px; border: 2px solid #c4c7c9; border-radius: 2px; }
.mail-toolbar input[type="checkbox"] { border-color: #444746; }
.mail-toolbar input + button { margin-left: 10px; }
.refresh { margin-left: 37px; }
.more { margin-left: 33px; }
.range { margin-left: auto; margin-right: 30px; font-size: 17px; color: #5f6368; }
.page-btn { width: 48px; margin-right: 11px; color: #b0b3b6; }
.page-btn:last-child { margin-right: -10px; }
.flip { transform: rotate(180deg); }
.mail-scroll { flex: 1; min-height: 0; display: flex; }
.mail-content { flex: 1; min-width: 0; overflow: hidden; }
.scrollbar { width: 17px; flex: none; }
.scrollbar i { display: block; height: 57%; background: #c6c6c6; border: 1px solid #b4b4b4; }
.categories { display: flex; height: 72px; }
.categories button { position: relative; width: 350px; padding: 0 0 2px 24px; justify-content: flex-start; color: #444746; font-weight: 500; }
.categories svg { margin-right: 24px; }
.categories .active { color: #0b57d0; }
.categories .active::after { content: ""; position: absolute; left: 12px; right: 15px; bottom: 0; height: 4px; border-radius: 4px 4px 0 0; background: #0b57d0; }
.badge { margin-left: 14px; padding: 0 7px; border-radius: 12px; background: #188038; color: #fff; font-size: 18px; }

.messages { width: 100%; table-layout: fixed; border-collapse: separate; border-spacing: 0; white-space: nowrap; }
.c-check { width: 70px; }
.c-star { width: 44px; }
.c-from { width: 300px; }
.messages tr { background: #f2f5fc; color: #c0c3c6; }
.messages td { height: 42px; padding: 9px 0 8px; border-bottom: 1px solid #dfe4ea; vertical-align: top; overflow: hidden; color: #202124; }
.messages td:first-child { position: relative; padding-left: 28px; }
.messages td:nth-child(2) { color: inherit; padding: 8px 0 0 1px; }
.messages td span, .messages small { color: #5f6368; }
.messages small { font-size: 18px; }
.messages .new { background: #fff; }
.messages .new td { font-weight: 700; }
.messages .hover { color: #444746; }
.messages .hover td { border-bottom-color: #b9bdc4; box-shadow: inset 0 1px 0 #d4d8df; }
.messages .hover input { border-color: #444746; }
.grip { position: absolute; left: 9px; top: 8px; width: 16px; height: 26px; }
.chip { display: flex; align-items: center; width: 240px; height: 45px; margin: 14px 0 1px 3px; padding-left: 16px; gap: 12px; border: 2px solid #c7d0da; border-radius: 23px; color: #5f6368; }
.pdf-mark { fill: #fff; font-size: 10px; font-weight: 700; }

/* Right-hand panel */
.side-panel { width: 83px; flex: none; display: flex; flex-direction: column; align-items: center; padding-top: 27px; color: #000; }
.side-panel a { margin-bottom: 54px; }
.side-panel hr { width: 30px; height: 1px; margin: -3px 0 51px; border: 0; background: #dadce0; }
.hide { margin-top: auto; margin-bottom: 9px; }
.cal-mark { fill: #4285f4; font-size: 12px; font-weight: 700; }

/* Compose window */
.composer {
  position: absolute;
  right: 105px;
  bottom: 0;
  width: 765px;
  height: 656px;
  display: flex;
  flex-direction: column;
  border-radius: 12px 12px 0 0;
  background: #fff;
  box-shadow: 0 4px 24px 2px rgba(0, 0, 0, .4);
  color: #444746;
}
.composer header { display: flex; align-items: center; height: 60px; padding: 0 21px 0 24px; gap: 12px; border-radius: 12px 12px 0 0; background: #f2f6fc; }
.composer h2 { flex: 1; font-size: 21px; font-weight: 500; color: #041e49; }
.field { display: flex; margin: 0 24px; border-bottom: 1px solid #e3e6ea; }
.to { height: 60px; padding: 15px 7px 0 0; }
.to label { margin-right: 12px; }
.to input { flex: 1; min-width: 0; }
.to button { height: 24px; margin-left: 8px; }
.caret { width: 2px; height: 26px; margin-top: 3px; background: #000; }
.subject { height: 54px; align-items: center; }
.subject input { flex: 1; }
.subject input::placeholder { color: #757779; opacity: 1; }
.composer textarea { flex: 1; margin: 0 24px; resize: none; }
.composer footer { display: flex; align-items: center; height: 93px; padding: 0 15px 2px 24px; }
.ai { width: 120px; height: 54px; border-radius: 5px 0 0 5px; background: #1a73e8; color: #fff; font-weight: 500; }
.send { display: flex; flex: none; width: 157px; height: 54px; margin-left: 12px; overflow: hidden; border-radius: 27px; background: #0b57d0; color: #fff; font-weight: 500; }
.send button:first-child { width: 109px; border-right: 1px solid #08367f; }
.send button:last-child { flex: 1; padding-right: 4px; }
.tools { flex: 1; display: flex; margin-left: 12px; }
.tools button { position: relative; width: 42px; height: 42px; margin-right: 6px; }
.tools .lit { border-radius: 6px; background: linear-gradient(135deg, #e0e9fb, #bcdcff); }
.tools .tool-more { margin: 0 0 0 2px; }
.tool-more i { position: absolute; right: 3px; top: 2px; width: 9px; height: 9px; border-radius: 50%; background: #1a73e8; }

/* Windows taskbar */
.taskbar {
  display: flex;
  flex: none;
  align-items: center;
  height: 71px;
  border-top: 2px solid #45484f;
  background: linear-gradient(90deg, #1e2229 15%, #12224a 22%, #171c45 33%, #12204f 44%, #1b2033 56%, #14214b 67%, #1b2029 75%, #1e2229);
  color: #fff;
  font-family: "Open Sans", "Noto Sans", sans-serif;
  font-size: 17px;
}
.weather { flex: 1 1 0; justify-content: flex-start; padding-left: 28px; gap: 6px; text-align: left; }
.weather svg { width: 42px; height: 46px; margin-top: -8px; overflow: visible; }
.weather text { font-size: 17px; fill: #111; }
.weather span { color: #c9cbce; }
.weather b { display: block; font-weight: 400; color: #fff; }
.apps { display: flex; align-items: center; gap: 6px; }
.apps button { position: relative; width: 60px; height: 60px; border-radius: 6px; }
.tb-search { display: flex; align-items: center; width: 330px; height: 48px; margin: 0 1px; padding: 0 10px 0 12px; border: 1px solid #525a7c; border-radius: 24px; background: #39406a; }
.tb-search input { flex: 1; min-width: 0; margin-left: 12px; font-size: 19px; }
.tb-search input::placeholder { color: #d5d7e2; opacity: 1; }
.puppet { width: 66px; height: 46px; }
.running::after { content: ""; position: absolute; left: 26px; bottom: 1px; width: 9px; height: 5px; border-radius: 3px; background: #9698a0; }
.apps .focused { background: #2b3048; border: 1px solid #363b50; }
.focused::after { left: 17px; bottom: 0; width: 24px; background: #4cc2ff; }
.tray { flex: 1 1 90px; display: flex; align-items: center; justify-content: flex-end; padding-right: 29px; }
.up { transform: rotate(180deg); }
.lang { margin: 0 28px 0 30px; text-align: center; }
.status { gap: 12px; }
.clock { margin-left: 24px; text-align: right; font-size: 18px; }
.bell { margin-left: 11px; }
```
